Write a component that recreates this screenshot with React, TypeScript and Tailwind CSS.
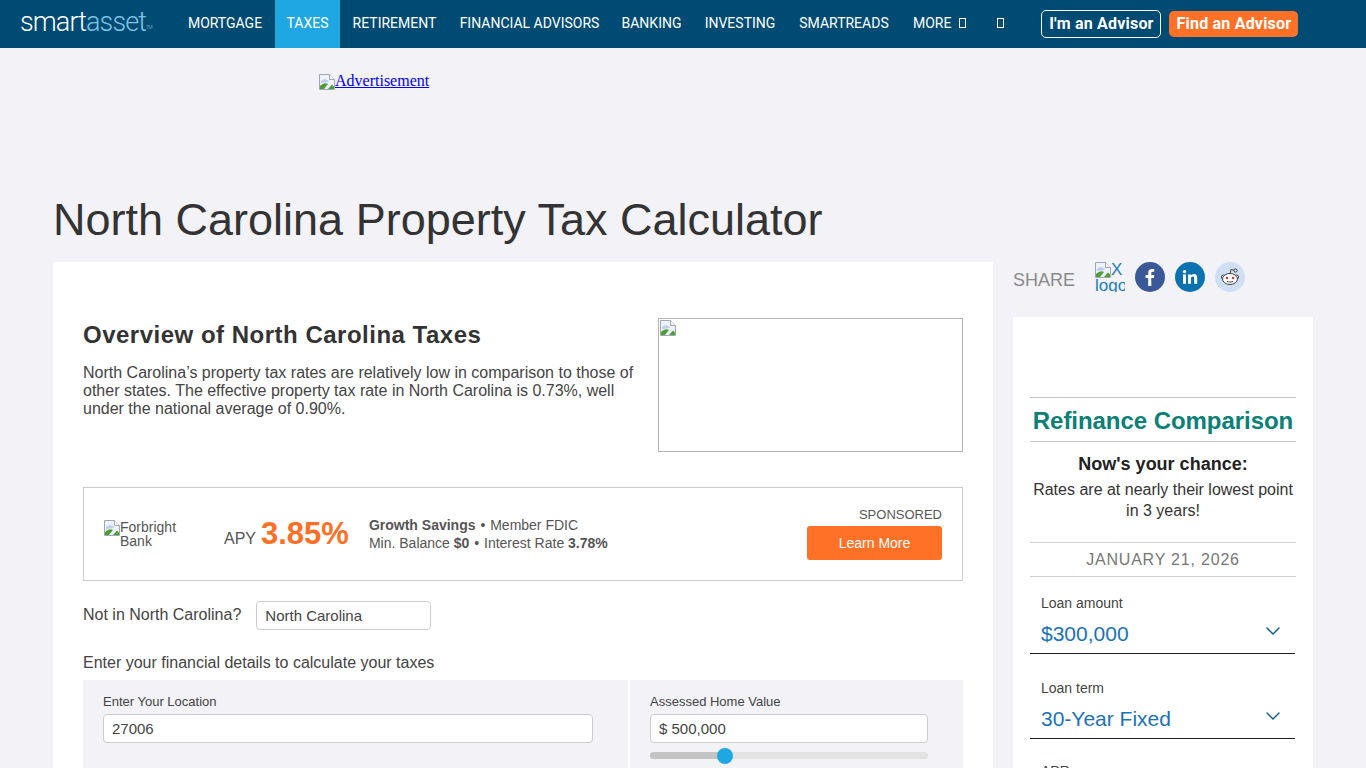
import { ChevronDown } from "lucide-react"

const navItems = [
  { label: "MORTGAGE", width: "w-[100px]" },
  { label: "TAXES", width: "w-[65px]" },
  { label: "RETIREMENT", width: "w-[109px]" },
  { label: "FINANCIAL ADVISORS", width: "w-[161px]" },
  { label: "BANKING", width: "w-[83px]" },
  { label: "INVESTING", width: "w-[94px]" },
  { label: "SMARTREADS", width: "w-[114px]" },
]

function BrokenImage() {
  return (
    <svg width="16" height="16" viewBox="0 0 16 16" className="inline-block shrink-0 align-top">
      <path d="M0.5 0.5H10.5L15.5 5.5V15.5H0.5Z" fill="#eef2fa" stroke="#a0a6b4" />
      <path d="M10.5 0.5V5.5H15.5" fill="#fff" stroke="#a0a6b4" />
      <path d="M2 7.5C4 4.5 8 4.5 10 8L2 9Z" fill="#bccdec" />
      <path d="M1 15V12C4 9 7 8.5 9 10L5 15Z" fill="#4f9e35" />
      <path d="M9 15L13 10.5L15 12.5V15Z" fill="#4f9e35" />
    </svg>
  )
}

function TofuGlyph() {
  return <span className="inline-block h-[10px] w-[7px] border border-white" />
}

function FieldSelect({ label, value }: { label: string; value: string }) {
  return (
    <div className="mb-[26px]">
      <div className="pl-[11px] text-[14px] leading-[16px] text-[#444]">{label}</div>
      <div className="mt-[10px] mr-[1px] flex h-[33px] items-start justify-between border-b border-[#222] pl-[11px] pr-[10px]">
        <span className="text-[21px] leading-[26px] text-[#1a73b8]">{value}</span>
        <ChevronDown className="-mt-[2px] h-[24px] w-[24px] text-[#0b5a8c]" strokeWidth={1.4} />
      </div>
    </div>
  )
}

export default function App() {
  return (
    <div className="h-[768px] overflow-hidden bg-[#f2f2f7] font-['Liberation_Sans',Arial,sans-serif] text-[#333]">
      {/* top nav */}
      <header className="flex h-12 items-center bg-[#004b73] font-['Roboto',sans-serif] text-white">
        <div className="-mt-[3px] ml-5 w-[155px] shrink-0 text-[27px] font-light leading-none tracking-[-0.9px]">
          smart<span className="text-[#7cc4e4]">asset</span>
          <sup className="text-[5px] text-[#7cc4e4]">TM</sup>
        </div>
        <nav className="flex h-full items-center text-[14px]">
          {navItems.map((item) => (
            <a
              key={item.label}
              className={`flex h-full items-center justify-center pb-[2px] ${item.width} ${item.label === "TAXES" ? "bg-[#1fa7e4]" : ""}`}
            >
              {item.label}
            </a>
          ))}
          <a className="flex h-full items-center gap-2 px-3 pb-[2px]">
            MORE <TofuGlyph />
          </a>
          <a className="ml-[7px] flex h-full items-center px-3 pb-[2px]">
            <TofuGlyph />
          </a>
        </nav>
        <a className="ml-[25px] flex h-[28px] w-[120px] items-center justify-center rounded-[5px] border border-white pb-[1px] text-[16px] font-bold tracking-[0.2px]">
          I'm an Advisor
        </a>
        <a className="ml-2 flex h-[26px] w-[129px] items-center justify-center rounded-[5px] bg-[#ff7126] pb-[1px] text-[16px] font-bold tracking-[0.2px]">
          Find an Advisor
        </a>
      </header>

      {/* ad slot */}
      <div className="h-[148px] pl-[319px] pt-[24px] font-['Liberation_Serif',serif] text-[16px] leading-[18px] text-[#0000ee] underline">
        <a className="inline-flex items-end"><BrokenImage />Advertisement</a>
      </div>

      <h1 className="pl-[53px] text-[45px] leading-[48px] text-[#333]">North Carolina Property Tax Calculator</h1>

      <div className="mt-[18px] flex gap-5 pl-[53px]">
        {/* main card */}
        <main className="h-[600px] w-[940px] shrink-0 bg-white px-[30px] pt-[56px]">
          <div className="flex justify-between">
            <div className="w-[555px]">
              <h2 className="pt-[1px] text-[24px] font-bold leading-[32px] tracking-[0.5px] text-[#333]">Overview of North Carolina Taxes</h2>
              <p className="mt-[13px] text-[16px] leading-[18px] text-[#444]">
                North Carolina’s property tax rates are relatively low in comparison to those of other states. The effective property tax rate in North Carolina is 0.73%, well under the national average of 0.90%.
              </p>
            </div>
            <div className="h-[134px] w-[305px] border border-[#b5b5b5] p-[1px]">
              <BrokenImage />
            </div>
          </div>

          {/* sponsored offer */}
          <div className="mt-[35px] flex h-[94px] items-center border border-[#ccc] px-5">
            <div className="flex w-[120px] text-[14px] leading-[14px] text-[#555]">
              <BrokenImage />
              <span className="w-[62px]">Forbright Bank</span>
            </div>
            <div className="flex items-baseline">
              <span className="text-[16px] text-[#555]">APY</span>
              <span className="ml-[5px] text-[31px] font-bold leading-[36px] text-[#ff6f26]">3.85%</span>
            </div>
            <div className="ml-[20px] text-[14px] leading-[18px] text-[#555]">
              <div><b>Growth Savings</b> <span className="mx-[1px]">•</span> Member FDIC</div>
              <div>Min. Balance <b>$0</b> <span className="mx-[1px]">•</span> Interest Rate <b>3.78%</b></div>
            </div>
            <div className="mb-[4px] ml-auto flex w-[135px] flex-col items-end">
              <span className="pt-[1px] text-[13px] leading-[17px] text-[#555]">SPONSORED</span>
              <a className="mt-[3px] flex h-[34px] w-full items-center justify-center rounded-[3px] bg-[#ff7126] pt-[1px] text-[14px] text-white">Learn More</a>
            </div>
          </div>

          <div className="mt-5 flex items-center">
            <span className="mb-[2px] text-[16px] text-[#444]">Not in North Carolina?</span>
            <div className="ml-[15px] flex h-[29px] w-[175px] items-center rounded-[4px] border border-[#ccc] pl-2 pt-[1px] text-[15px] text-[#444]">North Carolina</div>
          </div>

          <p className="mt-[24px] text-[16px] leading-[18px] text-[#444]">Enter your financial details to calculate your taxes</p>

          {/* calculator inputs */}
          <div className="mt-[8px] flex h-[200px] gap-[2px]">
            <div className="w-[545px] bg-[#f2f2f7] px-5 pt-[14px]">
              <label className="block text-[13px] leading-[15px] text-[#444]">Enter Your Location</label>
              <div className="mt-[5px] flex h-[29px] w-[490px] items-center rounded-[4px] border border-[#ccc] bg-white pl-2 pt-[1px] text-[15px] text-[#444]">27006</div>
            </div>
            <div className="flex-1 bg-[#f2f2f7] px-5 pt-[14px]">
              <label className="block text-[13px] leading-[15px] text-[#444]">Assessed Home Value</label>
              <div className="mt-[5px] flex h-[29px] w-[278px] items-center rounded-[4px] border border-[#ccc] bg-white pl-2 pt-[1px] text-[15px] text-[#444]">$ 500,000</div>
              <div className="relative mt-[9px] h-[7px] w-[278px] rounded-full bg-[#e2e2e2]">
                <div className="h-full w-[75px] rounded-full bg-[#c4c4c4]" />
                <div className="absolute left-[67px] top-[-4px] h-[16px] w-[16px] rounded-full bg-[#1fa7e4]" />
              </div>
            </div>
          </div>
        </main>

        {/* sidebar */}
        <aside className="w-[300px] shrink-0">
          <div className="flex h-[55px] items-start">
            <span className="mt-[6px] text-[18px] leading-[24px] text-[#8a8a8a]">SHARE</span>
            <a className="ml-5 block h-[30px] w-[30px] shrink-0 overflow-hidden text-[17px] leading-[16px] text-[#1a7fbd]">
              <BrokenImage />X logo
            </a>
            <a className="ml-[10px] flex h-[30px] w-[30px] items-center justify-center rounded-full bg-[#3b5998]">
              <svg width="16" height="18" viewBox="0 0 16 18" fill="#fff"><path d="M6.2 18V10H3.6V7h2.6V4.9C6.2 2.3 7.8 1 10 1c1 0 1.9.1 2.2.1v2.7h-1.5c-1.2 0-1.4.6-1.4 1.4V7h3l-.4 3H9.3v8z" /></svg>
            </a>
            <a className="ml-[10px] flex h-[30px] w-[30px] items-center justify-center rounded-full bg-[#0a72b0]">
              <svg width="16" height="16" viewBox="0 0 16 16" fill="#fff"><rect x="1" y="5.4" width="3" height="9.4" /><circle cx="2.5" cy="2.6" r="1.7" /><path d="M6 5.4h2.9v1.3c.5-.8 1.5-1.6 3-1.6 2.7 0 3.3 1.8 3.3 4.2v5.5h-3V10c0-1.1 0-2.4-1.5-2.4S9 8.7 9 9.9v4.9H6z" /></svg>
            </a>
            <a className="ml-[10px] flex h-[30px] w-[30px] items-center justify-center rounded-full bg-[#cfe0f5]">
              <svg width="22" height="22" viewBox="0 0 22 22">
                <circle cx="16.5" cy="4.5" r="1.6" fill="none" stroke="#444" />
                <path d="M11 8L12 3.5L15 4.2" fill="none" stroke="#444" />
                <circle cx="4.4" cy="11" r="2" fill="#fff" stroke="#444" />
                <circle cx="17.6" cy="11" r="2" fill="#fff" stroke="#444" />
                <ellipse cx="11" cy="13" rx="7.5" ry="5.5" fill="#fff" stroke="#444" />
                <circle cx="8" cy="12" r="1.2" fill="#d9352a" />
                <circle cx="14" cy="12" r="1.2" fill="#d9352a" />
                <path d="M8 15.3C9.5 16.4 12.5 16.4 14 15.3" fill="none" stroke="#444" />
              </svg>
            </a>
          </div>

          <div className="h-[600px] bg-white px-[17px] pt-[80px]">
            <h3 className="flex h-[45px] items-center justify-center border-y border-[#c8c8c8] pt-[3px] text-[24px] font-bold tracking-[-0.05px] text-[#0a8077]">Refinance Comparison</h3>
            <div className="mt-[12px] text-center text-[#222]">
              <div className="text-[18px] font-bold leading-[20px]">Now's your chance:</div>
              <p className="mt-[5px] text-[16px] leading-[21px] text-[#333]">Rates are at nearly their lowest point in 3 years!</p>
            </div>
            <div className="mt-[21px] flex h-[35px] items-center justify-center border-y border-[#cfcfcf] text-[16px] tracking-[0.8px] text-[#777]">JANUARY 21, 2026</div>
            <div className="mt-[18px]">
              <FieldSelect label="Loan amount" value="$300,000" />
              <FieldSelect label="Loan term" value="30-Year Fixed" />
              <div className="-mt-[2px] pl-[11px] text-[14px] leading-[16px] text-[#444]">APR</div>
            </div>
          </div>
        </aside>
      </div>
    </div>
  )
}
